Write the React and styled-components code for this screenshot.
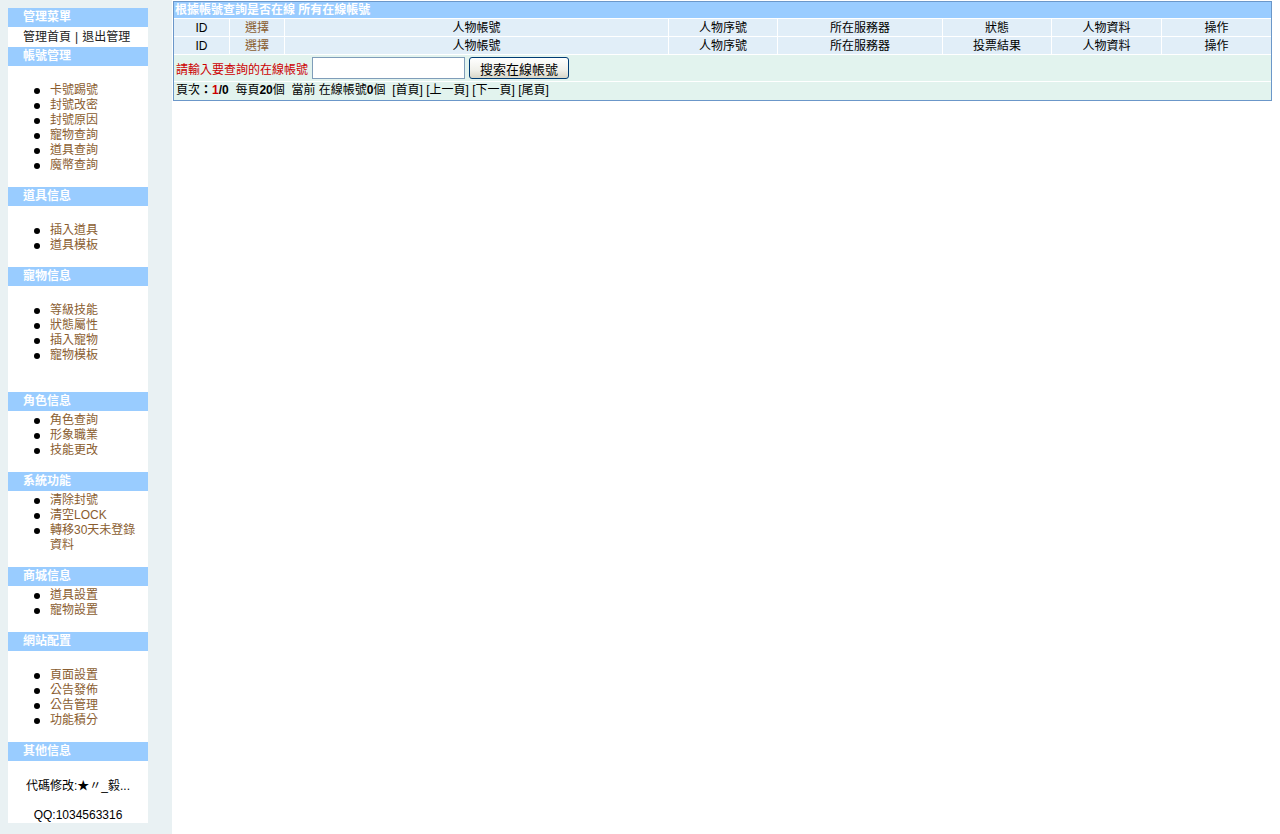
import React from "react";
import styled, { createGlobalStyle } from "styled-components";

const Global = createGlobalStyle`
  html, body { margin: 0; padding: 0; background: #fff; }
  body {
    font-family: "Liberation Sans", "Noto Sans CJK TC", sans-serif;
    font-size: 12px;
    color: #000;
  }
`;

const Page = styled.div`
  display: grid;
  grid-template-columns: 172px 1fr;
  min-height: 100vh;
`;

const Side = styled.aside`
  background: #e9f1f3;
  padding: 8px 0 0 8px;
`;

const Menu = styled.div`
  width: 140px;
  background: #fff;
  display: flex;
  flex-direction: column;
`;

const MenuHead = styled.div`
  height: 19px;
  line-height: 19px;
  background: #99ccff;
  color: #fff;
  font-weight: bold;
  padding-left: 15px;
`;

const TopLinks = styled.div`
  height: 20px;
  line-height: 20px;
  padding-left: 15px;
  color: #222;
  & span { margin: 0 4px; }
`;

const ItemList = styled.ul`
  margin: 0;
  padding: ${(p) => (p.$lead ? 17 : 2)}px 0 ${(p) => (p.$tail ? 29 : 14)}px 42px;
  list-style: none;
  line-height: 15px;
`;

const Item = styled.li`
  position: relative;
  padding-right: 4px;
  &::before {
    content: "";
    position: absolute;
    left: -16px;
    top: 5px;
    width: 6px;
    height: 6px;
    border-radius: 50%;
    background: #000;
  }
`;

const MenuLink = styled.a`
  color: #8a5d30;
  text-decoration: none;
`;

const Credits = styled.div`
  padding: 18px 0 0;
  text-align: center;
  line-height: 15px;
  & p { margin: 0; }
  & p + p { margin-top: 14px; }
`;

const Main = styled.main`
  padding: 1px 8px 0 1px;
`;

const Board = styled.div`
  border: 1px solid #6b97c9;
  display: flex;
  flex-direction: column;
  gap: 1px;
  background: #fff;
`;

const Title = styled.div`
  height: 16px;
  line-height: 16px;
  background: #99ccff;
  color: #fff;
  font-weight: bold;
  padding-left: 1px;
`;

const Row = styled.div`
  display: grid;
  grid-template-columns: 55px 54px 1fr 108px 164px 108px 109px 109px;
  gap: 1px;
  background: #fff;
`;

const Cell = styled.div`
  background: #e1eef8;
  height: 17px;
  line-height: 18px;
  text-align: center;
  color: ${(p) => (p.$link ? "#8a5d30" : "#000")};
`;

const Band = styled.div`
  background: #e2f3ee;
  height: ${(p) => p.$h}px;
  display: flex;
  align-items: center;
  padding-left: 2px;
  gap: 4px;
`;

const Prompt = styled.span`
  color: #cc0000;
`;

const Field = styled.input`
  width: 153px;
  height: 22px;
  box-sizing: border-box;
  border: 1px solid #7f9db9;
  padding: 0 3px;
  margin: 0;
  font: inherit;
`;

const Btn = styled.button`
  width: 100px;
  height: 22px;
  box-sizing: border-box;
  border: 1px solid #003c74;
  border-radius: 3px;
  background: linear-gradient(#ffffff, #f0f0ea 60%, #d8d6c8);
  font-family: "Liberation Sans", "Noto Sans CJK TC", sans-serif;
  font-size: 13px;
  color: #000;
  padding: 0;
  margin: 0;
`;

const Pager = styled.span`
  line-height: 14px;
  margin-bottom: 3px;
  & b { font-weight: bold; }
  & em { font-style: normal; font-weight: bold; color: #cc0000; }
`;

const sections = [
  { title: "帳號管理", lead: true, items: ["卡號踢號", "封號改密", "封號原因", "寵物查詢", "道具查詢", "魔幣查詢"] },
  { title: "道具信息", lead: true, items: ["插入道具", "道具模板"] },
  { title: "寵物信息", lead: true, tail: true, items: ["等級技能", "狀態屬性", "插入寵物", "寵物模板"] },
  { title: "角色信息", items: ["角色查詢", "形象職業", "技能更改"] },
  { title: "系統功能", items: ["清除封號", "清空LOCK", "轉移30天未登錄資料"] },
  { title: "商城信息", items: ["道具設置", "寵物設置"] },
  { title: "網站配置", lead: true, items: ["頁面設置", "公告發佈", "公告管理", "功能積分"] },
];

const headRow = ["ID", "選擇", "人物帳號", "人物序號", "所在服務器", "狀態", "人物資料", "操作"];
const subRow = ["ID", "選擇", "人物帳號", "人物序號", "所在服務器", "投票結果", "人物資料", "操作"];

export default function App() {
  return (
    <>
      <Global />
      <Page>
        <Side>
          <Menu>
            <MenuHead>管理菜單</MenuHead>
            <TopLinks>
              管理首頁<span>|</span>退出管理
            </TopLinks>
            {sections.map((s) => (
              <React.Fragment key={s.title}>
                <MenuHead>{s.title}</MenuHead>
                <ItemList $lead={s.lead} $tail={s.tail}>
                  {s.items.map((it) => (
                    <Item key={it}>
                      <MenuLink href="#">{it}</MenuLink>
                    </Item>
                  ))}
                </ItemList>
              </React.Fragment>
            ))}
            <MenuHead>其他信息</MenuHead>
            <Credits>
              <p>代碼修改:★〃_毅...</p>
              <p>QQ:1034563316</p>
            </Credits>
          </Menu>
        </Side>
        <Main>
          <Board>
            <Title>根據帳號查詢是否在線 所有在線帳號</Title>
            <Row>
              {headRow.map((h, i) => (
                <Cell key={i} $link={i === 1}>{h}</Cell>
              ))}
            </Row>
            <Row>
              {subRow.map((h, i) => (
                <Cell key={i} $link={i === 1}>{h}</Cell>
              ))}
            </Row>
            <Band $h={26}>
              <Prompt>請輸入要查詢的在線帳號</Prompt>
              <Field type="text" />
              <Btn type="button">搜索在線帳號</Btn>
            </Band>
            <Band $h={18}>
              <Pager>
                頁次<b>：</b><em>1</em><b>/0</b>&nbsp; 每頁<b>20</b>個&nbsp; 當前 在線帳號<b>0</b>個&nbsp; [首頁] [上一頁] [下一頁] [尾頁]
              </Pager>
            </Band>
          </Board>
        </Main>
      </Page>
    </>
  );
}
